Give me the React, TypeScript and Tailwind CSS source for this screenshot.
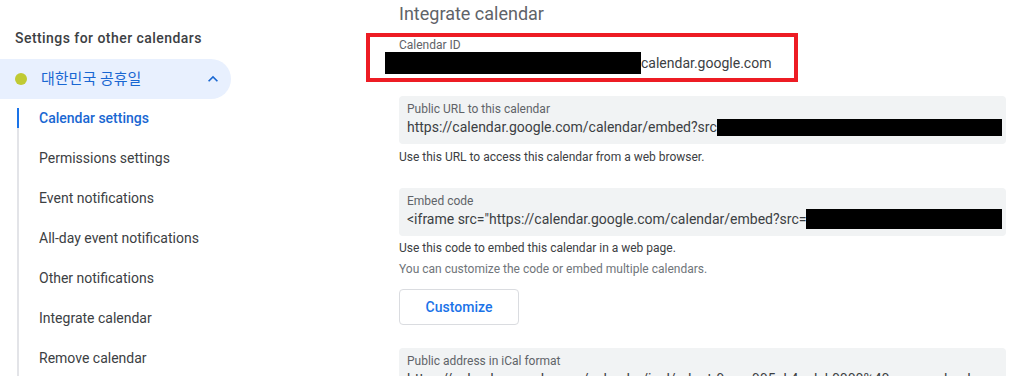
const navItems = [
  'Permissions settings',
  'Event notifications',
  'All-day event notifications',
  'Other notifications',
  'Integrate calendar',
  'Remove calendar',
];

function ExpandLess() {
  return (
    <svg width="20" height="20" viewBox="0 0 24 24" fill="#1967d2">
      <path d="M12 8l-6 6 1.41 1.41L12 10.83l4.59 4.58L18 14z" />
    </svg>
  );
}

function Field({ label, value, redact, redactH }: { label: string; value: string; redact?: boolean; redactH?: string }) {
  return (
    <div className="rounded-[4px] bg-[#f1f3f4] pb-[7px] pl-[8px] pt-[5px]">
      <div className="h-[16px] text-[12px] leading-[16px] text-[#5f6368]">{label}</div>
      <div className="flex h-[20px] items-center overflow-hidden whitespace-nowrap text-[14px] leading-[20px] text-[#3c4043]">
        <span className="shrink-0">{value}</span>
        {redact && <span className={`mr-[4px] flex-1 bg-black ${redactH}`} />}
      </div>
    </div>
  );
}

export default function App() {
  return (
    <div className="flex h-[376px] w-[1009px] overflow-hidden bg-white font-[Roboto,'Noto_Sans_CJK_KR',sans-serif]">
      <aside className="w-[256px] shrink-0">
        <div className="pl-[15px] pt-[28px] text-[14px] font-medium leading-[20px] tracking-[0.45px] text-[#3c4043]">
          Settings for other calendars
        </div>
        <div className="mt-[11px] flex h-[40px] w-[231px] items-center rounded-r-full bg-[#e8f0fe] pl-[15px] pr-[8px]">
          <span className="h-[12px] w-[12px] rounded-full bg-[#c0ca33]" />
          <span className="ml-[14px] text-[15px] leading-[20px] text-[#1967d2]">대한민국 공휴일</span>
          <span className="ml-auto flex">
            <ExpandLess />
          </span>
        </div>
        <div className="ml-[17px] mt-[9px] flex flex-col gap-[20px] border-l-2 border-[#e3e4e8] pb-[20px]">
          <div className="-ml-[2px] h-[20px] border-l-2 border-[#1a73e8] pl-[20px] text-[14px] font-medium leading-[20px] text-[#1967d2]">
            Calendar settings
          </div>
          {navItems.map((item) => (
            <div key={item} className="h-[20px] pl-[20px] text-[14px] leading-[20px] text-[#3c4043]">
              {item}
            </div>
          ))}
        </div>
      </aside>

      <main className="relative ml-[143px] w-[607px] shrink-0">
        <h2 className="pt-[2px] text-[18px] leading-[24px] text-[#5f6368]">Integrate calendar</h2>

        <div className="mt-[11px] h-[16px] text-[12px] leading-[16px] text-[#5f6368]">Calendar ID</div>
        <div className="flex h-[20px] items-center whitespace-nowrap text-[14px] leading-[20px] text-[#3c4043]">
          <span className="-ml-[14px] h-[22px] w-[256px] shrink-0 bg-black" />
          <span>calendar.google.com</span>
        </div>
        <div className="pointer-events-none absolute -left-[33px] top-[33px] h-[49px] w-[432px] border-[4px] border-[#ed1c24]" />

        <div className="mt-[23px]">
          <Field label="Public URL to this calendar" value="https://calendar.google.com/calendar/embed?src" redact redactH="h-[17px]" />
        </div>
        <p className="mt-[5px] text-[12px] leading-[16px] text-[#3c4043]">Use this URL to access this calendar from a web browser.</p>

        <div className="mt-[23px]">
          <Field label="Embed code" value={'<iframe src="https://calendar.google.com/calendar/embed?src='} redact redactH="h-[20px]" />
        </div>
        <p className="mt-[4px] text-[12px] leading-[16px] text-[#3c4043]">Use this code to embed this calendar in a web page.</p>
        <p className="mt-[5px] text-[12px] leading-[16px] text-[#70757a]">You can customize the code or embed multiple calendars.</p>

        <button className="mt-[12px] h-[36px] w-[120px] rounded-[4px] border border-[#dadce0] bg-white text-[14px] font-medium text-[#1a73e8]">
          Customize
        </button>

        <div className="mt-[23px]">
          <Field
            label="Public address in iCal format"
            value="https://calendar.google.com/calendar/ical/qduqtr9cour995nk4oalek0000%40group.calendar.google.com/public/basic.ics"
          />
        </div>
      </main>
    </div>
  );
}
